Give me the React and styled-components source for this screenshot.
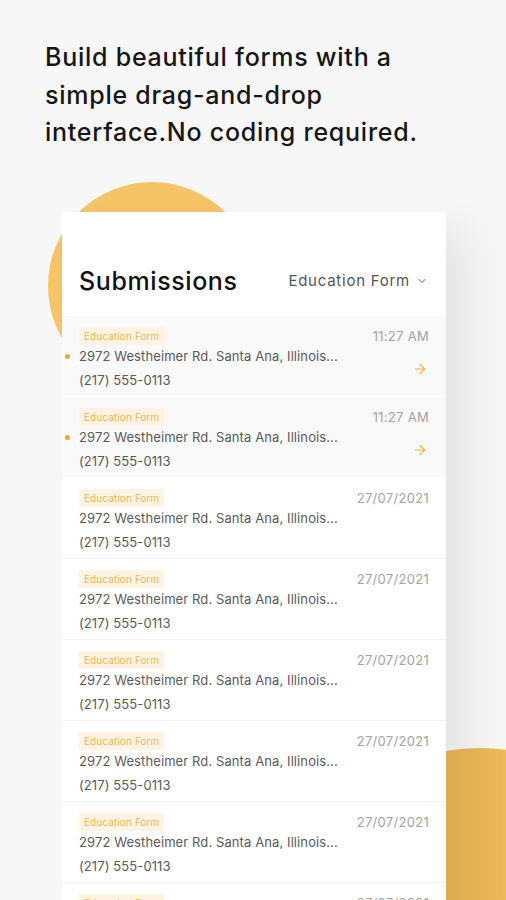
import React from "react";
import styled, { createGlobalStyle } from "styled-components";
import { ChevronDown, ArrowRight } from "lucide-react";

const GlobalStyle = createGlobalStyle`
	html, body {
		margin: 0;
		padding: 0;
		background: #f7f7f7;
		font-family: Inter, "Noto Sans", sans-serif;
		overflow: hidden;
	}
`;

const Page = styled.div`
	width: 506px;
	height: 900px;
	overflow: hidden;
	background: #f7f7f7;
`;

const Headline = styled.h1`
	margin: 0;
	padding: 39px 30px 0 45px;
	font-size: 25px;
	line-height: 37.5px;
	font-weight: 500;
	color: #161616;
	letter-spacing: 0.75px;
`;

const Stage = styled.div`
	position: relative;
	margin-top: 60px;
	padding-left: 62px;
`;

const Circle = styled.div`
	position: absolute;
	z-index: 0;
	border-radius: 50%;
	left: ${({ x }) => x}px;
	top: ${({ y }) => y}px;
	width: ${({ size }) => size}px;
	height: ${({ size }) => size}px;
	background: ${({ bg }) => bg};
`;

const Card = styled.div`
	position: relative;
	z-index: 1;
	width: 384px;
	background: #fff;
	box-shadow: 26px 18px 36px rgba(0, 0, 0, 0.07);
`;

const Header = styled.div`
	display: flex;
	align-items: center;
	justify-content: space-between;
	height: 104px;
	padding: 34px 18px 0 17px;
	box-sizing: border-box;
`;

const Title = styled.h2`
	margin: 0;
	font-size: 25px;
	font-weight: 500;
	color: #111;
	letter-spacing: 0.6px;
`;

const Picker = styled.div`
	display: flex;
	align-items: center;
	gap: 6px;
	font-size: 15px;
	color: #555;
	letter-spacing: 0.75px;
`;

const Row = styled.div`
	position: relative;
	height: 81px;
	box-sizing: border-box;
	padding: 11px 17px 0 17px;
	background: ${({ unread }) => (unread ? "#f9f9f9" : "#fff")};
	border-bottom: 1px solid ${({ unread }) => (unread ? "#fdfdfd" : "#f3f3f3")};
	display: grid;
	grid-template-columns: 1fr auto;
	grid-template-rows: 18px 23px 24px;
	align-items: center;
`;

const Tag = styled.span`
	justify-self: start;
	align-self: start;
	height: 18px;
	line-height: 18px;
	padding: 0 5px;
	background: #fff4e3;
	color: #f2b450;
	font-size: 10px;
	letter-spacing: 0.1px;
`;

const Stamp = styled.span`
	font-size: 13px;
	color: #a3a3a3;
	letter-spacing: 0.3px;
	justify-self: end;
`;

const Line = styled.span`
	position: relative;
	font-size: 13px;
	color: #5a5a5a;
	letter-spacing: 0.1px;
	white-space: nowrap;
`;

const Dot = styled.span`
	position: absolute;
	left: -14px;
	top: 50%;
	width: 5px;
	height: 5px;
	margin-top: -2.5px;
	border-radius: 50%;
	background: #f0a830;
`;

const Go = styled.span`
	grid-row: 2 / 4;
	grid-column: 2;
	justify-self: end;
	display: flex;
	padding: 2px 1px 0 0;
	color: #f2ad3e;
`;

const rows = [
	{ time: "11:27 AM", unread: true },
	{ time: "11:27 AM", unread: true },
	{ time: "27/07/2021" },
	{ time: "27/07/2021" },
	{ time: "27/07/2021" },
	{ time: "27/07/2021" },
	{ time: "27/07/2021" },
	{ time: "27/07/2021" },
];

const Submission = ({ time, unread }) => (
	<Row unread={unread}>
		<Tag>Education Form</Tag>
		<Stamp>{time}</Stamp>
		<Line>
			{unread && <Dot />}
			2972 Westheimer Rd. Santa Ana, Illinois...
		</Line>
		{unread ? <Go><ArrowRight size={16} strokeWidth={1.8} /></Go> : <span />}
		<Line>(217) 555-0113</Line>
	</Row>
);

const App = () => (
	<Page>
		<GlobalStyle />
		<Headline>
			Build beautiful forms with a<br />
			simple drag-and-drop<br />
			interface.No coding required.
		</Headline>
		<Stage>
			<Circle x={48} y={-30} size={208} bg="#f5c464" />
			<Circle x={290} y={536} size={380} bg="linear-gradient(90deg, #e6b352, #efbe5e)" />
			<Card>
				<Header>
					<Title>Submissions</Title>
					<Picker>
						Education Form
						<ChevronDown size={12} strokeWidth={2} />
					</Picker>
				</Header>
				{rows.map((r, i) => (
					<Submission key={i} {...r} />
				))}
			</Card>
		</Stage>
	</Page>
);

export default App;
